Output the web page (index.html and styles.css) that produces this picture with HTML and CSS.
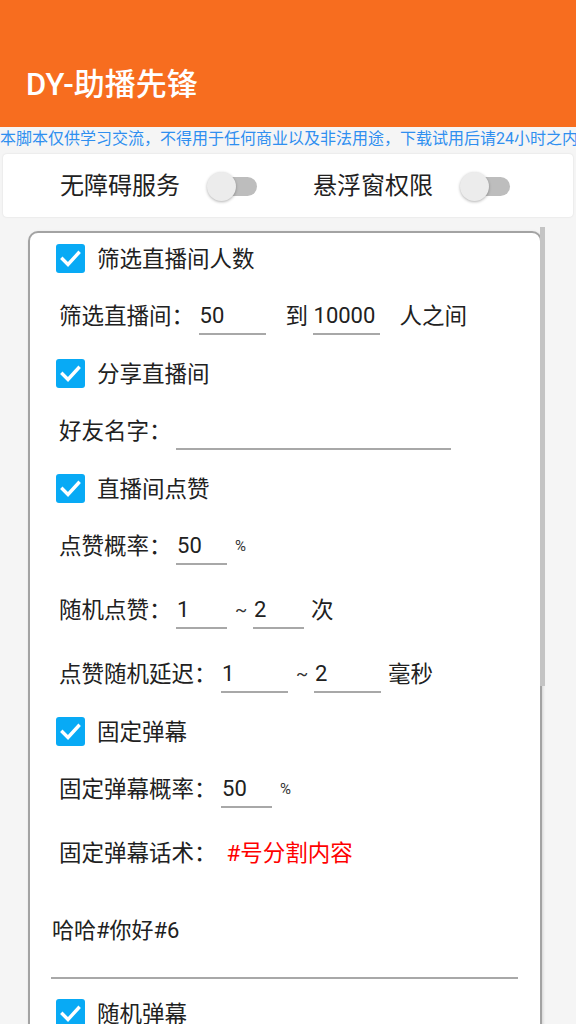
FILE: index.html
```html
<!DOCTYPE html>
<html lang="zh">
<head>
<meta charset="utf-8">
<title>DY-助播先锋</title>
<link rel="stylesheet" href="styles.css">
</head>
<body>
<header class="appbar"><h1 class="title">DY-助播先锋</h1></header>
<div class="notice">本脚本仅供学习交流，不得用于任何商业以及非法用途，下载试用后请24小时之内删除</div>
<section class="perm-card">
  <span class="perm-label">无障碍服务</span>
  <span class="switch"><span class="track"></span><span class="thumb"></span></span>
  <span class="perm-label perm-label2">悬浮窗权限</span>
  <span class="switch"><span class="track"></span><span class="thumb"></span></span>
</section>
<div class="scroll">
  <div class="scrollbar"></div>
  <main class="card">
    <div class="cb-row"><span class="cb"><svg viewBox="0 0 29 29"><polyline points="6.5,15 12,20.5 22.5,9" /></svg></span><span class="cb-text">筛选直播间人数</span></div>
    <div class="f-row"><span class="label">筛选直播间：</span><span class="input w67">50</span><span class="txt gap20">到</span><span class="input w67">10000</span><span class="txt gap20">人之间</span></div>
    <div class="cb-row"><span class="cb"><svg viewBox="0 0 29 29"><polyline points="6.5,15 12,20.5 22.5,9" /></svg></span><span class="cb-text">分享直播间</span></div>
    <div class="f-row"><span class="label">好友名字：</span><span class="input w275"></span></div>
    <div class="cb-row"><span class="cb"><svg viewBox="0 0 29 29"><polyline points="6.5,15 12,20.5 22.5,9" /></svg></span><span class="cb-text">直播间点赞</span></div>
    <div class="f-row"><span class="label">点赞概率：</span><span class="input w51">50</span><span class="small gap8">%</span></div>
    <div class="f-row"><span class="label">随机点赞：</span><span class="input w51">1</span><span class="small tilde">~</span><span class="input w51 nogap">2</span><span class="txt gap7">次</span></div>
    <div class="f-row"><span class="label">点赞随机延迟：</span><span class="input w67">1</span><span class="small tilde">~</span><span class="input w67 nogap">2</span><span class="txt gap7">毫秒</span></div>
    <div class="cb-row"><span class="cb"><svg viewBox="0 0 29 29"><polyline points="6.5,15 12,20.5 22.5,9" /></svg></span><span class="cb-text">固定弹幕</span></div>
    <div class="f-row"><span class="label">固定弹幕概率：</span><span class="input w51">50</span><span class="small gap8">%</span></div>
    <div class="f-row"><span class="label">固定弹幕话术：</span><span class="hint">#号分割内容</span></div>
    <div class="textarea">哈哈#你好#6</div>
    <div class="cb-row"><span class="cb"><svg viewBox="0 0 29 29"><polyline points="6.5,15 12,20.5 22.5,9" /></svg></span><span class="cb-text">随机弹幕</span></div>
    <div class="f-row"><span class="label">随机弹幕概率：</span><span class="input w51">50</span><span class="small gap8">%</span></div>
  </main>
</div>
</body>
</html>
```
FILE: styles.css
```css
html, body {
  margin: 0;
  padding: 0;
}
body {
  width: 576px;
  height: 1024px;
  overflow: hidden;
  background: #f5f5f5;
  font-family: Roboto, "Noto Sans CJK SC", sans-serif;
  color: #212121;
}
.appbar {
  height: 127px;
  box-sizing: border-box;
  padding: 42px 0 0 26px;
  background: #f76d1f;
  display: flex;
  align-items: center;
}
.title {
  margin: 0;
  font-size: 31px;
  font-weight: 500;
  color: #ffffff;
  line-height: 40px;
}
.notice {
  height: 24px;
  line-height: 24px;
  font-size: 16px;
  color: #2f8ff0;
  white-space: nowrap;
  overflow: hidden;
}
.perm-card {
  margin: 3px 3px 0 3px;
  height: 63px;
  box-sizing: border-box;
  background: #ffffff;
  border-radius: 4px;
  box-shadow: 0 0 2px rgba(0,0,0,0.12);
  display: flex;
  align-items: center;
  padding-left: 57px;
}
.perm-label {
  font-size: 24px;
  line-height: 30px;
}
.perm-label2 {
  margin-left: 56px;
}
.switch {
  position: relative;
  width: 50px;
  height: 30px;
  margin-left: 27px;
}
.switch .track {
  position: absolute;
  left: 12px;
  top: 6px;
  width: 38px;
  height: 19px;
  border-radius: 10px;
  background: #bdbdbd;
}
.switch .thumb {
  position: absolute;
  left: 0;
  top: 1px;
  width: 29px;
  height: 29px;
  border-radius: 50%;
  background: #ececec;
  box-shadow: 0 1px 3px rgba(0,0,0,0.3);
}
.scroll {
  position: relative;
  margin-top: 14px;
}
.scrollbar {
  position: absolute;
  left: 540px;
  top: -4px;
  width: 5px;
  height: 459px;
  background: #c4c4c4;
  z-index: 2;
}
.card {
  margin: 0 34px 0 28px;
  background: #ffffff;
  border: 2px solid #a3a3a3;
  border-radius: 10px;
  box-shadow: 1px 1px 3px rgba(0,0,0,0.15);
  padding-top: 0;
  font-size: 22.5px;
}
.cb-row {
  height: 51px;
  display: flex;
  align-items: center;
  padding-left: 26px;
}
.cb {
  width: 29px;
  height: 29px;
  border-radius: 3px;
  background: #08aaf5;
  display: flex;
}
.cb svg {
  width: 29px;
  height: 29px;
}
.cb polyline {
  fill: none;
  stroke: #ffffff;
  stroke-width: 3.4;
  stroke-linecap: square;
}
.cb-text {
  margin-left: 12px;
  line-height: 30px;
}
.f-row {
  height: 64px;
  display: flex;
  align-items: center;
  padding-left: 29px;
}
.label, .txt {
  line-height: 30px;
}
.input {
  box-sizing: border-box;
  height: 34px;
  line-height: 30px;
  padding: 0 0 2px 1px;
  margin-top: 4px;
  margin-left: 4.5px;
  border-bottom: 2px solid #a8a8a8;
  font-size: 22px;
}
.input.nogap { margin-left: 0; }
.w51 { width: 51px; }
.w67 { width: 67px; }
.w275 { width: 275px; }
.gap20 { margin-left: 20px; }
.gap7 { margin-left: 7px; }
.gap8 { margin-left: 8px; }
.small {
  font-size: 15px;
  line-height: 30px;
  color: #333333;
}
.tilde {
  width: 26px;
  padding-left: 8px;
  box-sizing: border-box;
  font-size: 18px;
}
.hint {
  margin-left: 10px;
  color: #ff0000;
  line-height: 30px;
}
.textarea {
  margin-left: 21px;
  width: 467px;
  box-sizing: border-box;
  padding: 31px 0 31px 1px;
  line-height: 30px;
  border-bottom: 2px solid #a8a8a8;
  margin-bottom: 9px;
  font-size: 22px;
}
```
